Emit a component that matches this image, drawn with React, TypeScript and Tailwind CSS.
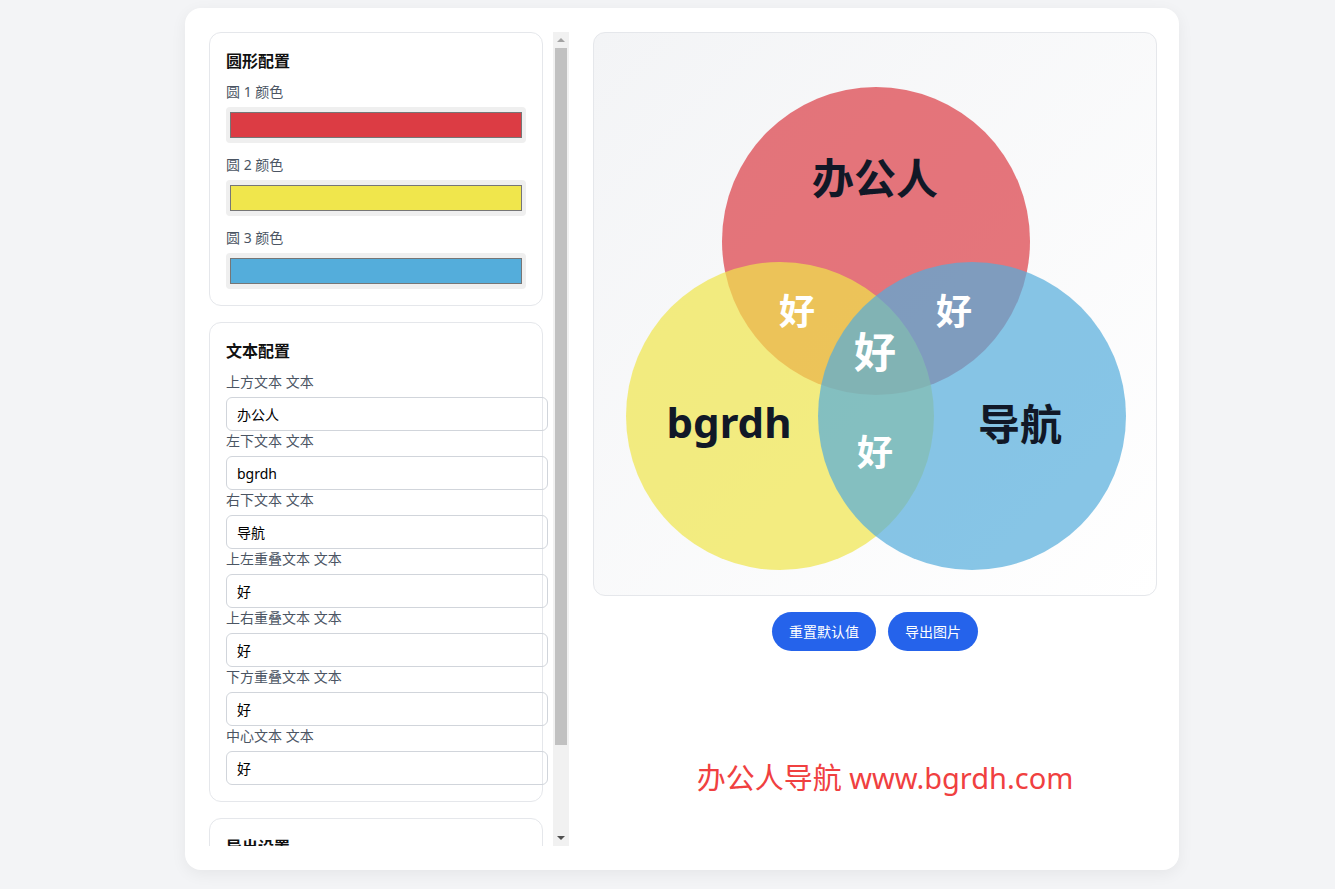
import { useState } from "react";

const font = { fontFamily: '"Noto Sans", "Noto Sans CJK SC", sans-serif' };

const defaults = {
  colors: ["#dc3c44", "#f0e64c", "#54addb"],
  texts: {
    top: "办公人",
    left: "bgrdh",
    right: "导航",
    topLeft: "好",
    topRight: "好",
    bottom: "好",
    center: "好",
  },
};

const textFields: { key: keyof typeof defaults.texts; label: string }[] = [
  { key: "top", label: "上方文本 文本" },
  { key: "left", label: "左下文本 文本" },
  { key: "right", label: "右下文本 文本" },
  { key: "topLeft", label: "上左重叠文本 文本" },
  { key: "topRight", label: "上右重叠文本 文本" },
  { key: "bottom", label: "下方重叠文本 文本" },
  { key: "center", label: "中心文本 文本" },
];

function ColorSwatch({ color }: { color: string }) {
  return (
    <div className="w-full h-[36px] bg-[#efefef] rounded-[4px] px-[4px] py-[5px]">
      <div className="w-full h-full border border-[#767676]" style={{ background: color }} />
    </div>
  );
}

/* classic scrollbar look, drawn since the headless page hides real ones */
function FakeScrollbar() {
  return (
    <div className="w-[16px] h-full bg-[#f1f1f1] flex flex-col shrink-0">
      <div className="h-[16px] flex items-center justify-center">
        <div className="w-0 h-0 border-x-[4px] border-x-transparent border-b-[4px] border-b-[#a3a3a3]" />
      </div>
      <div className="h-[697px] mx-[2px] bg-[#c1c1c1]" />
      <div className="flex-1" />
      <div className="h-[16px] flex items-center justify-center">
        <div className="w-0 h-0 border-x-[4px] border-x-transparent border-t-[4px] border-t-[#505050]" />
      </div>
    </div>
  );
}

function Venn({ colors, texts }: { colors: string[]; texts: typeof defaults.texts }) {
  return (
    <svg width="564" height="564" viewBox="0 0 564 564" style={font}>
      <circle cx="282" cy="208" r="154" fill={colors[0]} opacity="0.7" />
      <circle cx="186" cy="383" r="154" fill={colors[1]} opacity="0.7" />
      <circle cx="378" cy="383" r="154" fill={colors[2]} opacity="0.7" />
      <g fontWeight="700" textAnchor="middle" dominantBaseline="central">
        <text x="281" y="144" fontSize="42" fill="#111827">{texts.top}</text>
        <text x="135" y="388" fontSize="42" fill="#111827">{texts.left}</text>
        <text x="426" y="390" fontSize="42" fill="#111827">{texts.right}</text>
        <text x="203" y="278" fontSize="36" fill="#ffffff">{texts.topLeft}</text>
        <text x="360" y="278" fontSize="36" fill="#ffffff">{texts.topRight}</text>
        <text x="281" y="318" fontSize="42" fill="#ffffff">{texts.center}</text>
        <text x="281" y="419" fontSize="36" fill="#ffffff">{texts.bottom}</text>
      </g>
    </svg>
  );
}

export default function App() {
  const [colors] = useState(defaults.colors);
  const [texts, setTexts] = useState(defaults.texts);

  return (
    <div className="min-h-screen bg-[#f3f4f6] pt-2 pl-[185px]" style={font}>
      <div className="w-[994px] bg-white rounded-2xl shadow-[0_4px_16px_rgba(0,0,0,0.06)] p-6 flex gap-6">
        {/* ---- settings column ---- */}
        <div className="w-[360px] h-[814px] flex shrink-0">
          <div className="w-[344px] h-full overflow-hidden pr-[10px]">
            <div className="border border-[#e5e7eb] rounded-xl p-4 mb-4">
              <h3 className="text-base leading-6 font-bold text-[#111] mb-[9px]">圆形配置</h3>
              {colors.map((c, i) => (
                <div key={i} className={i < 2 ? "mb-3" : ""}>
                  <label className="block text-sm leading-5 text-[#4b5563] mb-[5px]">圆 {i + 1} 颜色</label>
                  <ColorSwatch color={c} />
                </div>
              ))}
            </div>

            <div className="border border-[#e5e7eb] rounded-xl p-4 mb-4">
              <h3 className="text-base leading-6 font-bold text-[#111] mb-[9px]">文本配置</h3>
              {textFields.map((f) => (
                <div key={f.key}>
                  <label className="block text-sm leading-5 text-[#4b5563] mb-[5px]">{f.label}</label>
                  <input
                    value={texts[f.key]}
                    onChange={(e) => setTexts({ ...texts, [f.key]: e.target.value })}
                    className="block w-[322px] h-[34px] border border-[#d1d5db] rounded-[6px] px-[10px] text-sm text-black outline-none"
                  />
                </div>
              ))}
            </div>

            <div className="border border-[#e5e7eb] rounded-xl p-4">
              <h3 className="text-base leading-6 font-bold text-[#111] mb-[9px]">导出设置</h3>
              <label className="block text-sm leading-5 text-[#4b5563] mb-[5px]">导出尺寸</label>
              <input
                defaultValue="564"
                className="block w-[322px] h-[34px] border border-[#d1d5db] rounded-[6px] px-[10px] text-sm text-black outline-none"
              />
            </div>
          </div>
          <FakeScrollbar />
        </div>

        {/* ---- preview column ---- */}
        <div className="flex-1 flex flex-col items-center">
          <div className="w-[564px] h-[564px] rounded-xl border border-[#e5e7eb] bg-linear-to-br from-[#f3f4f6] to-white overflow-hidden">
            <Venn colors={colors} texts={texts} />
          </div>
          <div className="flex gap-3 mt-4">
            <button className="h-[39px] px-[17px] rounded-full bg-[#2563eb] text-white text-sm">重置默认值</button>
            <button className="h-[39px] px-[17px] rounded-full bg-[#2563eb] text-white text-sm">导出图片</button>
          </div>
          <div className="mt-[107px] ml-[20px] text-[29px] leading-10 text-[#f04040]">办公人导航 www.bgrdh.com</div>
        </div>
      </div>
    </div>
  );
}
